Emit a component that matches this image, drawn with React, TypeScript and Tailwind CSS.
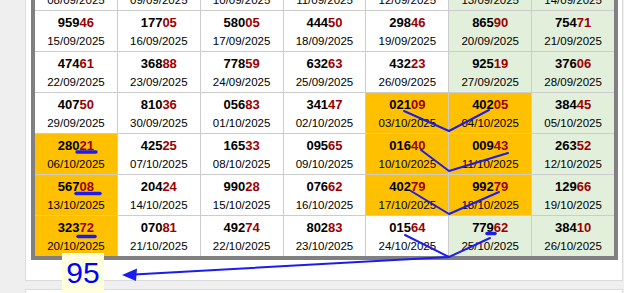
import React, { FC } from 'react';

type Cell = { num: string; date: string; bg?: 'o' | 'g' | 'w' };

const rows: Cell[][] = [
    [
        { num: '31072', date: '08/09/2025' },
        { num: '64519', date: '09/09/2025' },
        { num: '20938', date: '10/09/2025' },
        { num: '57146', date: '11/09/2025' },
        { num: '88302', date: '12/09/2025' },
        { num: '19457', date: '13/09/2025' },
        { num: '62081', date: '14/09/2025' },
    ],
    [
        { num: '95946', date: '15/09/2025' },
        { num: '17705', date: '16/09/2025' },
        { num: '58005', date: '17/09/2025' },
        { num: '44450', date: '18/09/2025' },
        { num: '29846', date: '19/09/2025' },
        { num: '86590', date: '20/09/2025' },
        { num: '75471', date: '21/09/2025' },
    ],
    [
        { num: '47461', date: '22/09/2025' },
        { num: '36888', date: '23/09/2025' },
        { num: '77859', date: '24/09/2025' },
        { num: '63263', date: '25/09/2025' },
        { num: '43223', date: '26/09/2025' },
        { num: '92519', date: '27/09/2025' },
        { num: '37606', date: '28/09/2025' },
    ],
    [
        { num: '40750', date: '29/09/2025' },
        { num: '81036', date: '30/09/2025' },
        { num: '05683', date: '01/10/2025' },
        { num: '34147', date: '02/10/2025' },
        { num: '02109', date: '03/10/2025', bg: 'o' },
        { num: '40205', date: '04/10/2025', bg: 'o' },
        { num: '38445', date: '05/10/2025' },
    ],
    [
        { num: '28021', date: '06/10/2025', bg: 'o' },
        { num: '42525', date: '07/10/2025' },
        { num: '16533', date: '08/10/2025' },
        { num: '09565', date: '09/10/2025' },
        { num: '01640', date: '10/10/2025', bg: 'o' },
        { num: '00943', date: '11/10/2025', bg: 'o' },
        { num: '26352', date: '12/10/2025' },
    ],
    [
        { num: '56708', date: '13/10/2025', bg: 'o' },
        { num: '20424', date: '14/10/2025' },
        { num: '99028', date: '15/10/2025' },
        { num: '07662', date: '16/10/2025' },
        { num: '40279', date: '17/10/2025', bg: 'o' },
        { num: '99279', date: '18/10/2025', bg: 'o' },
        { num: '12966', date: '19/10/2025' },
    ],
    [
        { num: '32372', date: '20/10/2025', bg: 'o' },
        { num: '07081', date: '21/10/2025' },
        { num: '49274', date: '22/10/2025' },
        { num: '80283', date: '23/10/2025' },
        { num: '01564', date: '24/10/2025', bg: 'w' },
        { num: '77962', date: '25/10/2025' },
        { num: '38410', date: '26/10/2025' },
    ],
];

const cellBg = (cell: Cell, col: number) => {
    if (cell.bg === 'o') return 'bg-[#ffc000]';
    if (cell.bg === 'w') return 'bg-white';
    return col >= 5 ? 'bg-[#e2efda]' : 'bg-white';
};

const ResultCell: FC<{ cell: Cell; col: number }> = ({ cell, col }) => (
    <div className={`h-[40px] flex flex-col items-center pt-[4px] ${cellBg(cell, col)}`}>
        <span className="text-[13px] leading-[16px] font-bold text-black">
            {cell.num.slice(0, 3)}
            <span className="text-[#9b0000]">{cell.num.slice(3)}</span>
        </span>
        <span className="mt-[3px] text-[11.5px] leading-[14px] text-black">{cell.date}</span>
    </div>
);

// blue pen marks drawn over the chart
const Annotations: FC = () => (
    <svg className="absolute inset-0 pointer-events-none" width="624" height="293" viewBox="0 0 624 293">
        <g fill="none" stroke="#1c1cf0" strokeWidth="2" strokeLinecap="round" strokeLinejoin="round">
            <polyline points="404,111 449,131 489,110" />
            <polyline points="421,150 449,171 508,153" />
            <polyline points="411,191 449,214 499,192" />
            <polyline points="405,235 449,257 490,238" />
            <line x1="449" y1="257" x2="134" y2="274.5" />
        </g>
        <g stroke="#1c1cf0" strokeWidth="3.5" strokeLinecap="round">
            <line x1="77" y1="152" x2="96" y2="152" />
            <line x1="76" y1="193.5" x2="100" y2="193.5" />
            <line x1="78" y1="236.5" x2="95" y2="236.5" />
            <line x1="487" y1="233.5" x2="495" y2="233.5" />
        </g>
        <polygon points="122,275 137,268.5 136,281" fill="#1c1cf0" />
    </svg>
);

export default function App() {
    return (
        <div className="relative w-[624px] h-[293px] overflow-hidden bg-[#efefef] font-['Liberation_Sans',Arial,sans-serif]">
            <div className="ml-[25px] w-[598px] -mt-[30px] bg-white border-x border-b border-[#dcdcdc] pl-[5px] pb-[20px]">
                <div className="w-[587px] border-x-4 border-b-4 border-[#808080] bg-[#cccccc] grid grid-cols-7 gap-px">
                    {rows.map((row, r) => row.map((cell, c) => (
                        <ResultCell key={`${r}-${c}`} cell={cell} col={c} />
                    )))}
                </div>
            </div>
            <div className="ml-[25px] w-[598px] mt-[8px] h-[20px] bg-white border border-[#dcdcdc]" />

            <div className="absolute left-[62px] top-[253px] w-[42px] h-[40px] bg-[#ffffe0] flex items-center justify-center">
                <span className="text-[30px] leading-none text-[#0000ff]">95</span>
            </div>
            <Annotations />
        </div>
    );
}
